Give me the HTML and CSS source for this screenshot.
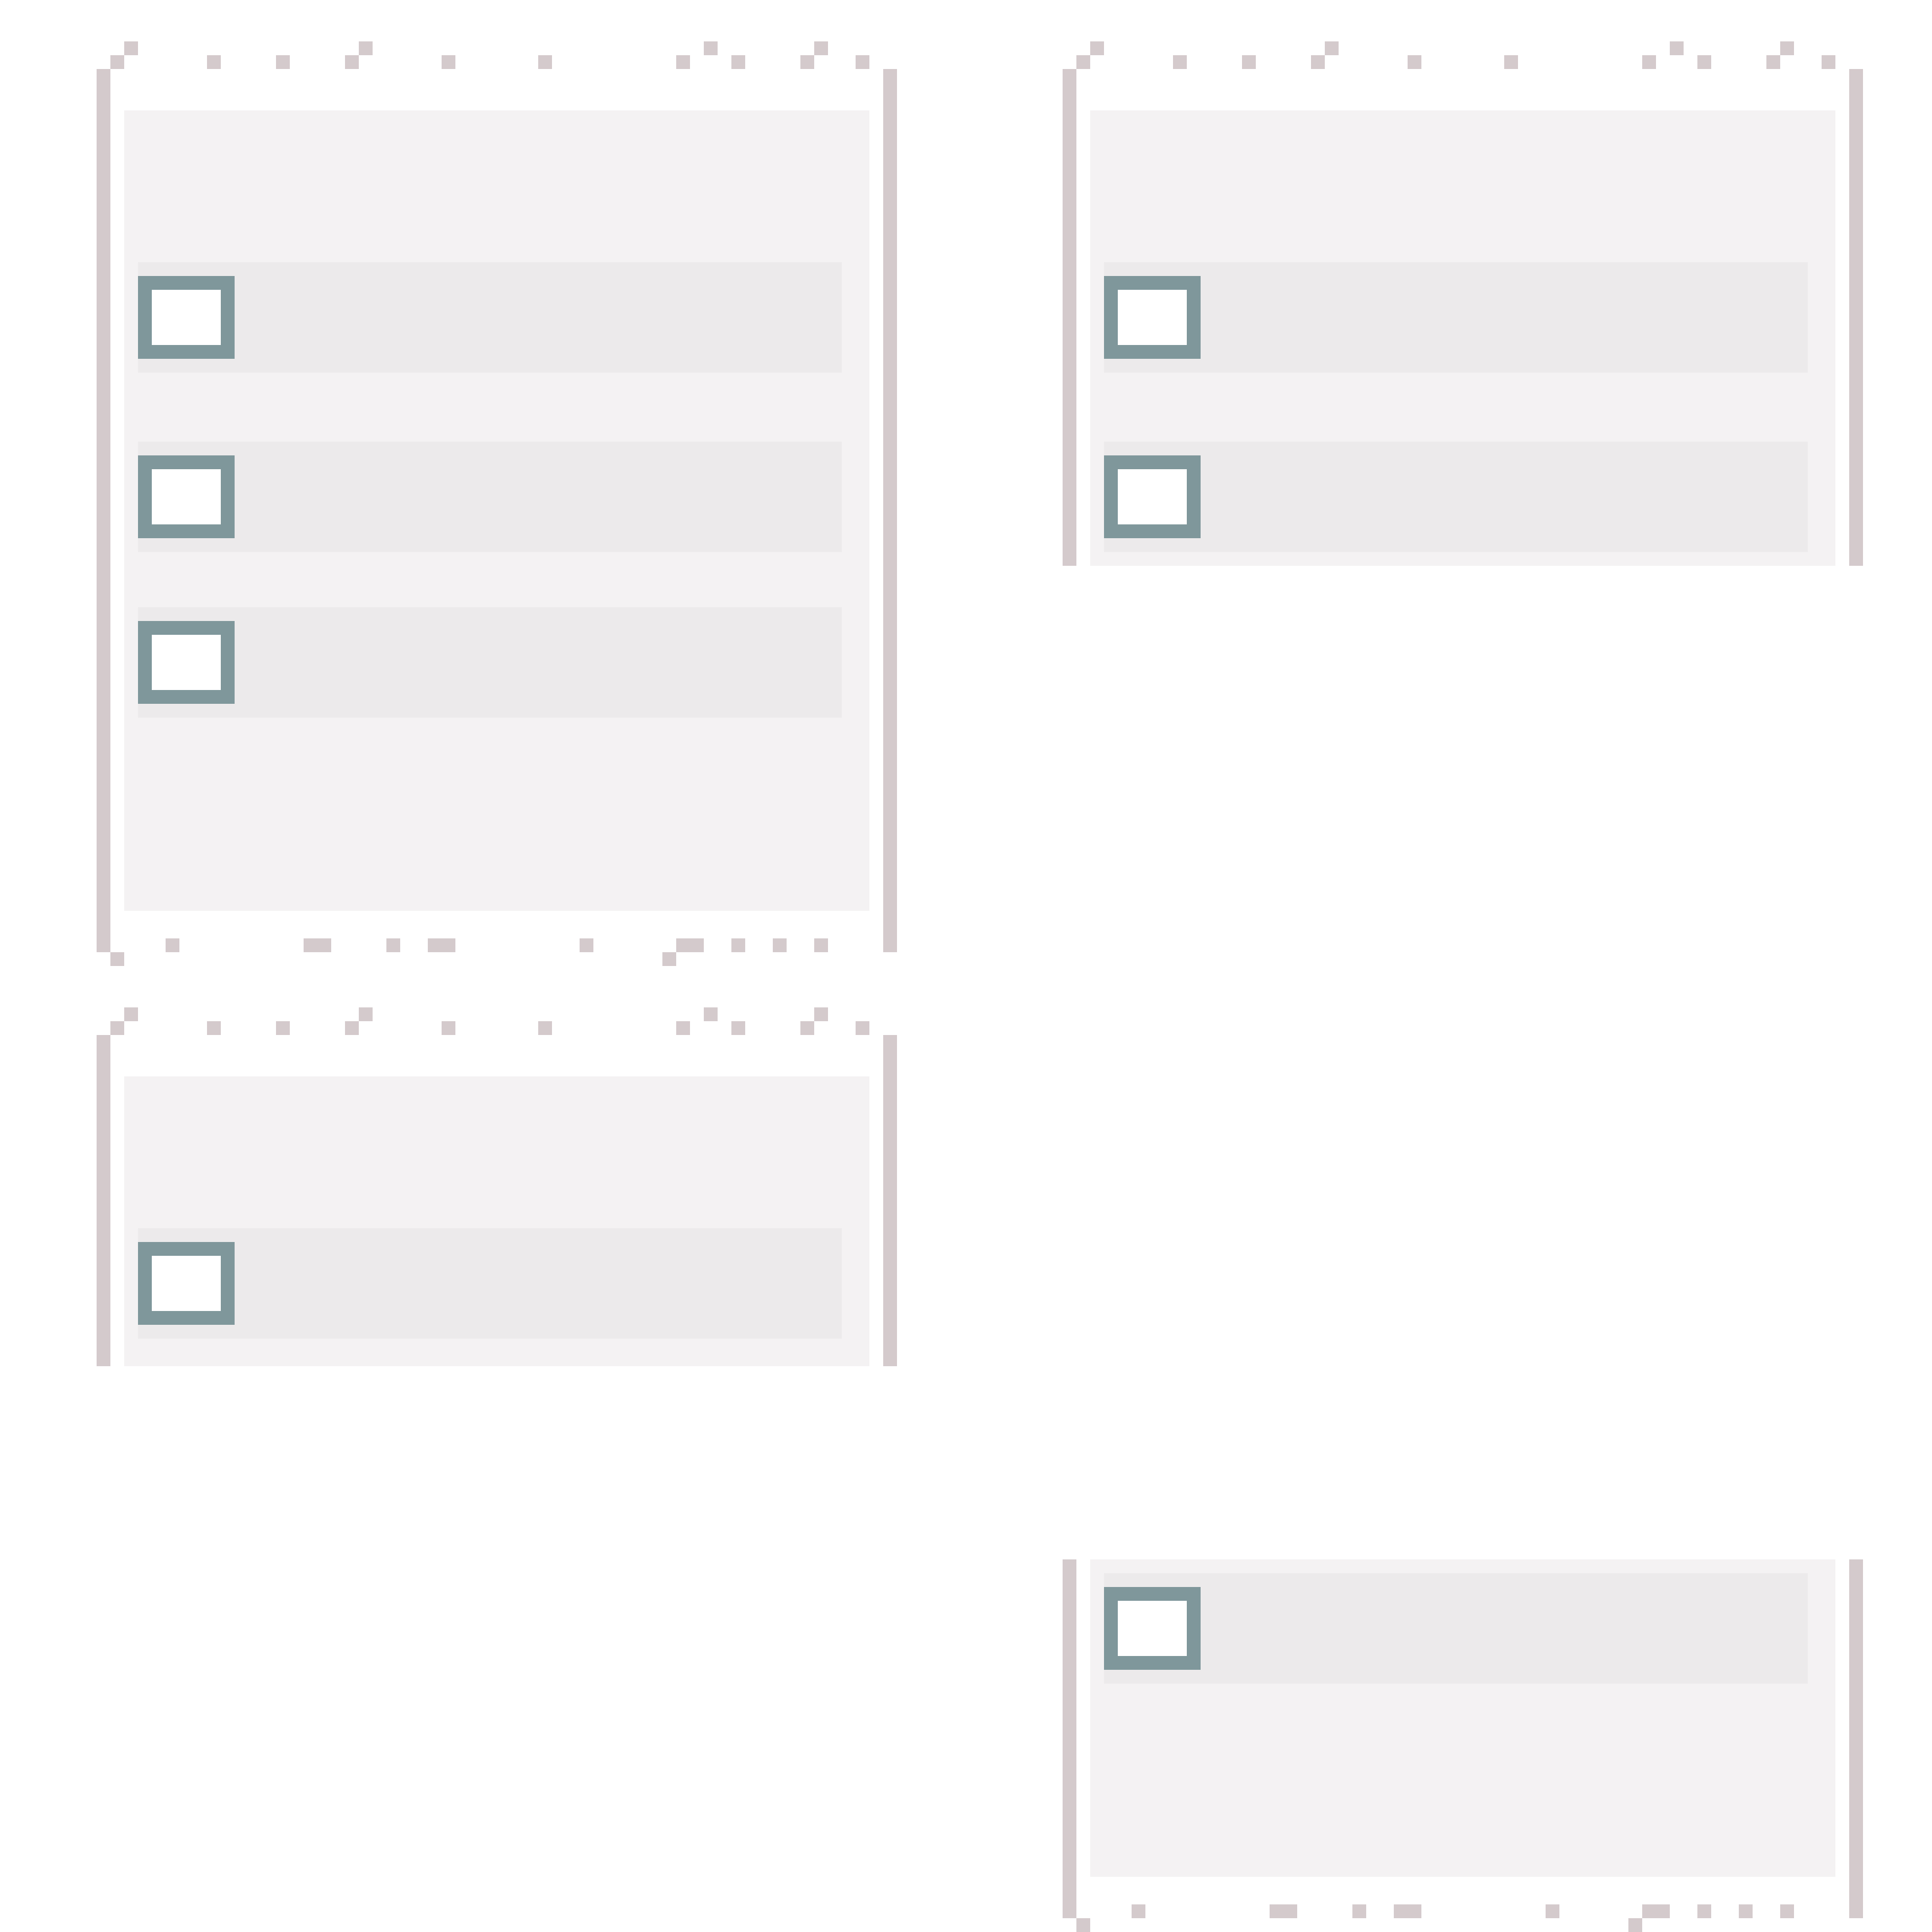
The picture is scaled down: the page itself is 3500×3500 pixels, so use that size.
FILE: index.html
```html
<!DOCTYPE html>
<html lang="en">
<head>
<meta charset="utf-8">
<title>Checklist cards</title>
<link rel="stylesheet" href="styles.css">
</head>
<body>
<main class="board">
  <section class="column">
    <div class="card">
      <div class="deco-top"></div>
      <div class="card-body">
        <span class="rail"></span>
        <div class="panel">
          <div class="item item--wide-gap"><span class="check"></span></div>
          <div class="item"><span class="check"></span></div>
          <div class="item"><span class="check"></span></div>
        </div>
        <span class="rail"></span>
      </div>
      <div class="deco-bottom"></div>
    </div>

    <div class="card card--open card--cut-50">
      <div class="deco-top"></div>
      <div class="card-body">
        <span class="rail"></span>
        <div class="panel">
          <div class="item"><span class="check"></span></div>
        </div>
        <span class="rail"></span>
      </div>
    </div>
  </section>

  <section class="column column--split">
    <div class="card card--open card--cut-25">
      <div class="deco-top"></div>
      <div class="card-body">
        <span class="rail"></span>
        <div class="panel">
          <div class="item item--wide-gap"><span class="check"></span></div>
          <div class="item"><span class="check"></span></div>
        </div>
        <span class="rail"></span>
      </div>
    </div>

    <div class="card card--cont">
      <div class="card-body">
        <span class="rail"></span>
        <div class="panel">
          <div class="item"><span class="check"></span></div>
        </div>
        <span class="rail"></span>
      </div>
      <div class="deco-bottom"></div>
    </div>
  </section>
</main>
</body>
</html>
```

FILE: styles.css
```css
html, body {
  margin: 0;
  padding: 0;
  background: #ffffff;
  overflow: hidden;
}

.board {
  display: grid;
  grid-template-columns: 1750px 1750px;
  min-height: 3500px;
}

.column {
  display: flex;
  flex-direction: column;
  gap: 75px;
  padding-top: 75px;
}

.column--split {
  justify-content: space-between;
}

.card {
  display: flex;
  flex-direction: column;
  width: 1450px;
  margin-left: 175px;
}

/* pixel-art top edge */
.deco-top {
  position: relative;
  height: 50px;
}

.deco-top::before {
  content: "";
  position: absolute;
  left: 0;
  top: 0;
  width: 25px;
  height: 25px;
  background: transparent;
  box-shadow:
    50px 0 0 #d4cacc,
    475px 0 0 #d4cacc,
    1100px 0 0 #d4cacc,
    1300px 0 0 #d4cacc,
    25px 25px 0 #d4cacc,
    200px 25px 0 #d4cacc,
    325px 25px 0 #d4cacc,
    450px 25px 0 #d4cacc,
    625px 25px 0 #d4cacc,
    800px 25px 0 #d4cacc,
    1050px 25px 0 #d4cacc,
    1150px 25px 0 #d4cacc,
    1275px 25px 0 #d4cacc,
    1375px 25px 0 #d4cacc;
}

/* pixel-art bottom edge (first row overlaps the rails' last 25px) */
.deco-bottom {
  position: relative;
  height: 25px;
}

.deco-bottom::before {
  content: "";
  position: absolute;
  left: 0;
  top: -25px;
  width: 25px;
  height: 25px;
  background: transparent;
  box-shadow:
    125px 0 0 #d4cacc,
    375px 0 0 #d4cacc,
    400px 0 0 #d4cacc,
    525px 0 0 #d4cacc,
    600px 0 0 #d4cacc,
    625px 0 0 #d4cacc,
    875px 0 0 #d4cacc,
    1050px 0 0 #d4cacc,
    1075px 0 0 #d4cacc,
    1150px 0 0 #d4cacc,
    1225px 0 0 #d4cacc,
    1300px 0 0 #d4cacc,
    25px 25px 0 #d4cacc,
    1025px 25px 0 #d4cacc;
}

.card-body {
  display: flex;
  gap: 25px;
}

.rail {
  flex: 0 0 25px;
  background: #d4cacc;
}

.panel {
  flex: 1;
  display: flex;
  flex-direction: column;
  gap: 100px;
  background: #f4f2f3;
  margin: 75px 0;
  padding: 275px 50px 350px 25px;
}

.card--open .panel {
  margin-bottom: 0;
}

.card--cut-50 .panel {
  padding-bottom: 50px;
}

.card--cut-25 .panel {
  padding-bottom: 25px;
}

.card--cont .panel {
  margin-top: 0;
  padding-top: 25px;
}

.item {
  height: 200px;
  box-sizing: border-box;
  padding-top: 25px;
  background: #eceaeb;
}

.item--wide-gap {
  margin-bottom: 25px;
}

.check {
  display: block;
  width: 175px;
  height: 150px;
  box-sizing: border-box;
  border: 25px solid #7f979b;
  background: #ffffff;
}
```
